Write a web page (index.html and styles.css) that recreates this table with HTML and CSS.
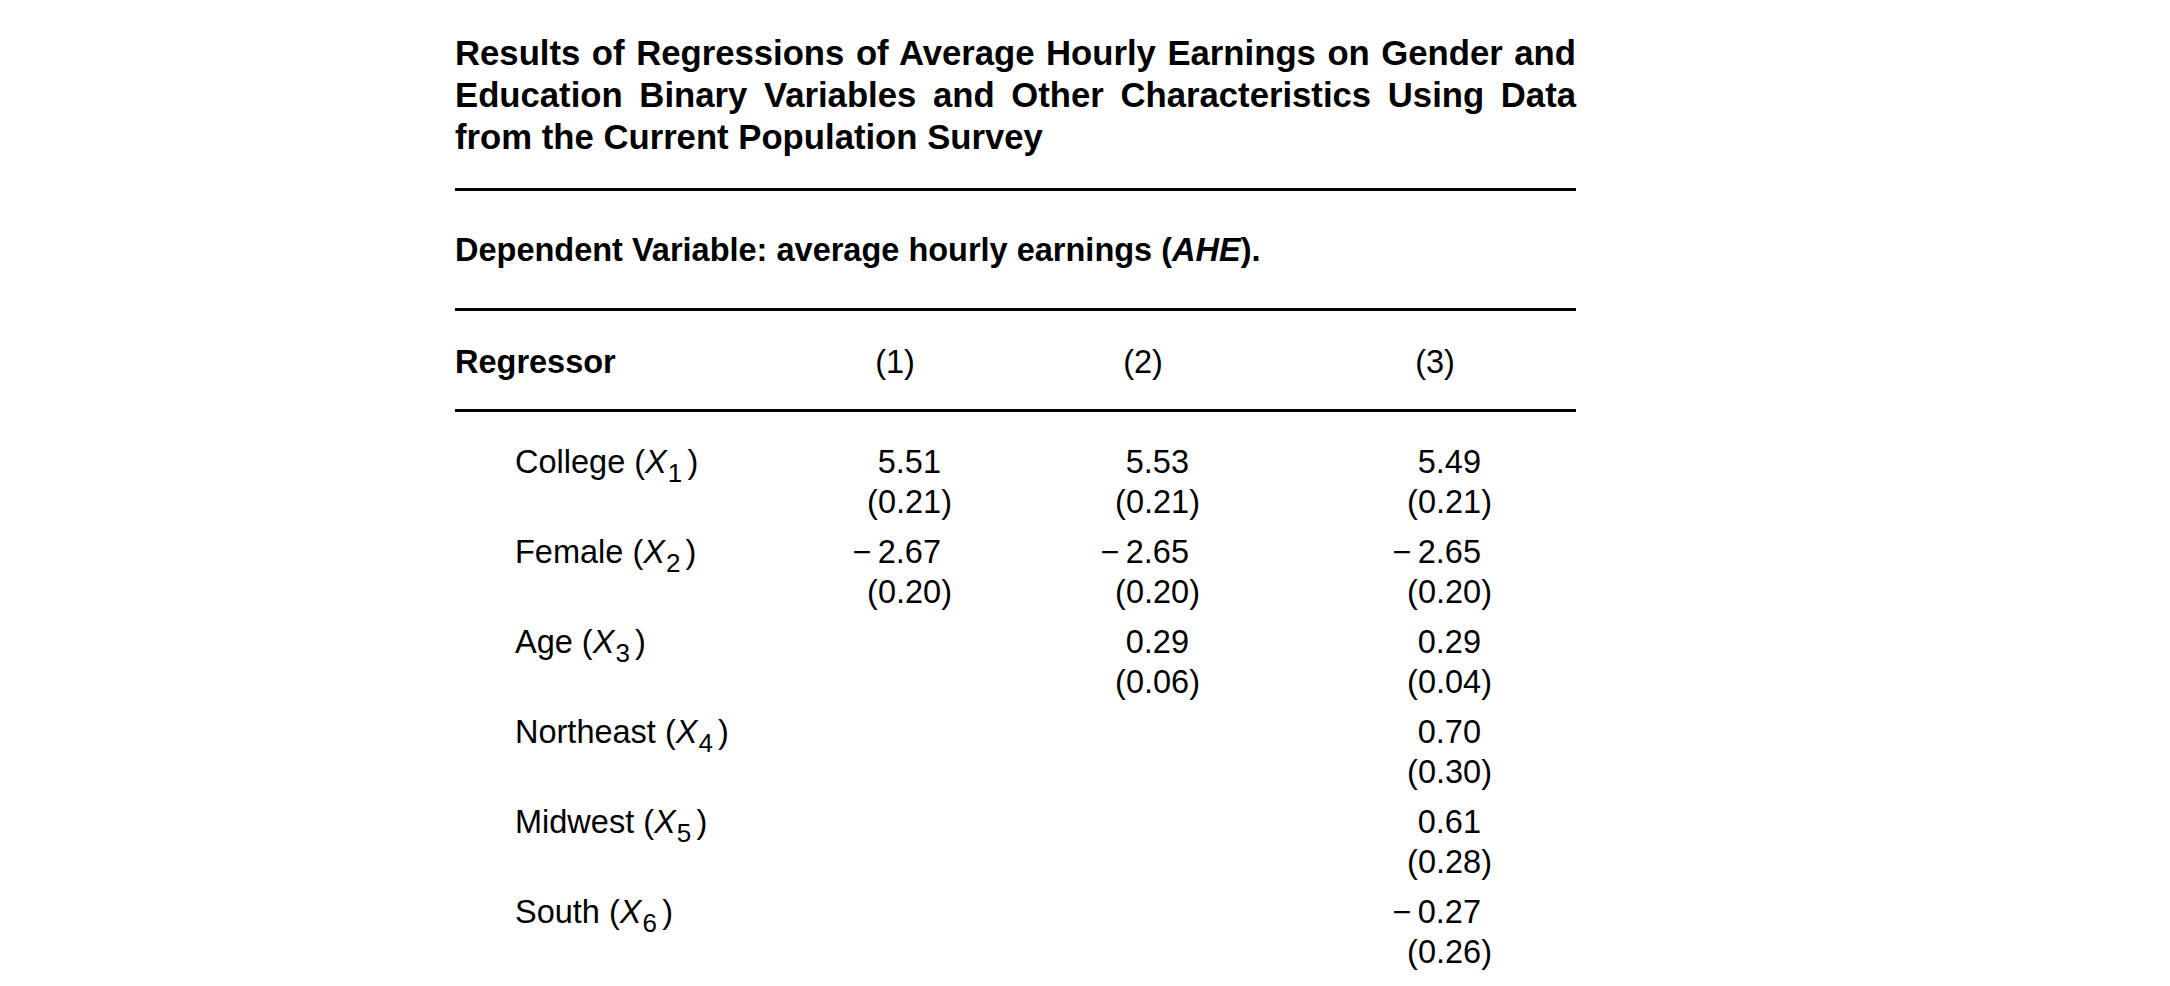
FILE: index.html
```html
<!DOCTYPE html>
<html lang="en">
<head>
<meta charset="utf-8">
<title>Regression Results</title>
<link rel="stylesheet" href="styles.css">
</head>
<body>
<main class="page">
  <h1 class="title">Results of Regressions of Average Hourly Earnings on Gender and Education Binary Variables and Other Characteristics Using Data from the Current Population Survey</h1>
  <div class="rule rule-first"></div>
  <p class="dep">Dependent Variable: average hourly earnings (<i>AHE</i>).</p>
  <div class="rule rule-second"></div>
  <div class="grid head">
    <div class="label-head">Regressor</div>
    <div class="hcol">(1)</div>
    <div class="hcol">(2)</div>
    <div class="hcol">(3)</div>
  </div>
  <div class="rule rule-third"></div>
  <div class="grid body">
    <div class="label">College (<i>X</i><span class="sub">1</span>)</div>
    <div class="val"><div class="coef">5.51</div><div class="se">(0.21)</div></div>
    <div class="val"><div class="coef">5.53</div><div class="se">(0.21)</div></div>
    <div class="val"><div class="coef">5.49</div><div class="se">(0.21)</div></div>

    <div class="label">Female (<i>X</i><span class="sub">2</span>)</div>
    <div class="val"><div class="coef"><span class="minus">−</span>2.67</div><div class="se">(0.20)</div></div>
    <div class="val"><div class="coef"><span class="minus">−</span>2.65</div><div class="se">(0.20)</div></div>
    <div class="val"><div class="coef"><span class="minus">−</span>2.65</div><div class="se">(0.20)</div></div>

    <div class="label">Age (<i>X</i><span class="sub">3</span>)</div>
    <div class="val"></div>
    <div class="val"><div class="coef">0.29</div><div class="se">(0.06)</div></div>
    <div class="val"><div class="coef">0.29</div><div class="se">(0.04)</div></div>

    <div class="label">Northeast (<i>X</i><span class="sub">4</span>)</div>
    <div class="val"></div>
    <div class="val"></div>
    <div class="val"><div class="coef">0.70</div><div class="se">(0.30)</div></div>

    <div class="label">Midwest (<i>X</i><span class="sub">5</span>)</div>
    <div class="val"></div>
    <div class="val"></div>
    <div class="val"><div class="coef">0.61</div><div class="se">(0.28)</div></div>

    <div class="label">South (<i>X</i><span class="sub">6</span>)</div>
    <div class="val"></div>
    <div class="val"></div>
    <div class="val"><div class="coef"><span class="minus">−</span>0.27</div><div class="se">(0.26)</div></div>
  </div>
</main>
</body>
</html>
```
FILE: styles.css
```css
html, body {
  margin: 0;
  padding: 0;
  background: #ffffff;
}

body {
  font-family: "Liberation Sans", Arial, sans-serif;
  color: #000000;
}

.page {
  width: 1121px;
  margin-left: 455px;
  padding-top: 32px;
}

.title {
  margin: 0;
  font-size: 34.7px;
  line-height: 42px;
  font-weight: bold;
  text-align: justify;
}

.rule {
  height: 3px;
  background: #000000;
}

.rule-first {
  margin-top: 30px;
}

.dep {
  margin: 39px 0 38px;
  font-size: 32.5px;
  line-height: 40px;
  font-weight: bold;
}

.grid {
  display: grid;
  grid-template-columns: 365px 248px 292px 150px;
  font-size: 32.5px;
  line-height: 40px;
}

.head {
  margin-top: 31px;
  margin-bottom: 27px;
}

.label-head {
  font-weight: bold;
}

.hcol {
  width: 150px;
  text-align: center;
}

.body {
  margin-top: 30px;
  row-gap: 10px;
}

.label {
  padding-left: 60px;
}

.sub {
  font-size: 0.8em;
  vertical-align: -0.34em;
  line-height: 0;
  margin-left: 1px;
  margin-right: 0.2em;
}

.val {
  width: 150px;
  box-sizing: border-box;
  padding-right: 18px;
  text-align: right;
}

.coef {
  padding-right: 11px;
}

.minus {
  margin-right: 0.2em;
}
```
